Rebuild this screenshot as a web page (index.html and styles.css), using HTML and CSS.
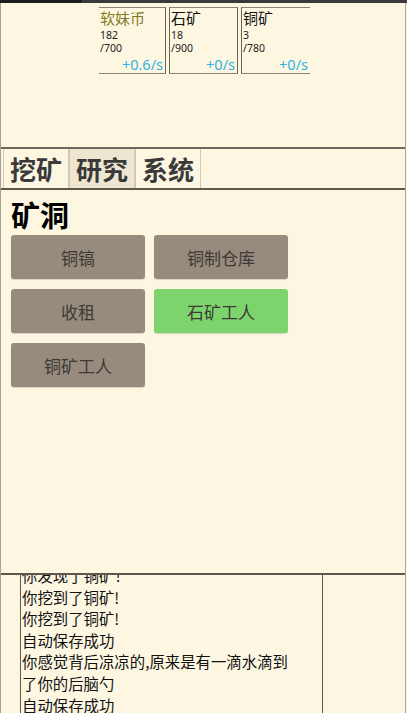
FILE: index.html
```html
<!DOCTYPE html>
<html lang="zh">
<head>
<meta charset="utf-8">
<title>矿洞</title>
<link rel="stylesheet" href="styles.css">
</head>
<body>
<div class="topbar"></div>
<div class="app">
  <section class="resources">
    <div class="res res-first">
      <div class="res-name gold">软妹币</div>
      <div class="res-num">182</div>
      <div class="res-num">/700</div>
      <div class="res-rate">+0.6/s</div>
    </div>
    <div class="res res-mid">
      <div class="res-name">石矿</div>
      <div class="res-num">18</div>
      <div class="res-num">/900</div>
      <div class="res-rate">+0/s</div>
    </div>
    <div class="res res-last">
      <div class="res-name">铜矿</div>
      <div class="res-num">3</div>
      <div class="res-num">/780</div>
      <div class="res-rate">+0/s</div>
    </div>
  </section>
  <nav class="tabs">
    <div class="tab">挖矿</div>
    <div class="tab tab-active">研究</div>
    <div class="tab">系统</div>
  </nav>
  <main class="panel">
    <h2 class="panel-title">矿洞</h2>
    <div class="actions">
      <button class="act">铜镐</button>
      <button class="act">铜制仓库</button>
      <button class="act">收租</button>
      <button class="act act-on">石矿工人</button>
      <button class="act">铜矿工人</button>
    </div>
  </main>
  <section class="log">
    <div class="log-box">
      <div class="log-lines">
        <div class="line">你发现了铜矿！</div>
        <div class="line">你挖到了铜矿!</div>
        <div class="line">你挖到了铜矿!</div>
        <div class="line">自动保存成功</div>
        <div class="line">你感觉背后凉凉的,原来是有一滴水滴到了你的后脑勺</div>
        <div class="line">自动保存成功</div>
      </div>
    </div>
  </section>
</div>
</body>
</html>
```

FILE: styles.css
```css
html, body {
  margin: 0;
  padding: 0;
  background: #fdf7e2;
  font-family: "Noto Sans", "Noto Sans CJK SC", sans-serif;
  color: #000;
}
.topbar {
  height: 3px;
  background: linear-gradient(90deg, #1e1e1e 0, #1e1e1e 82px, #3a3a3a 82px);
}
.app {
  width: 404px;
  border-left: 1px solid #a9a397;
  border-right: 1px solid #a9a397;
}
.resources {
  height: 146px;
  display: flex;
  justify-content: center;
  gap: 3px;
  padding-top: 4px;
  padding-left: 3px;
  box-sizing: border-box;
  border-bottom: 2px solid #6f685c;
}
.res {
  width: 67px;
  height: 67px;
  display: flex;
  flex-direction: column;
  border-top: 1px solid #8a8376;
  border-bottom: 1px solid #8a8376;
  box-sizing: border-box;
  padding: 0 2px 0 1px;
}
.res-first { border-right: 1px solid #6a6458; }
.res-mid { border-left: 1px solid #6a6458; border-right: 1px solid #6a6458; width: 69px; }
.res-last { border-left: 1px solid #6a6458; width: 69px; }
.res-name {
  font-family: "Noto Sans CJK SC", sans-serif;
  font-size: 15px;
  line-height: 19px;
  height: 19px;
  color: #111;
  margin-bottom: 2px;
}
.res-name.gold { color: #7f7a1f; }
.res-num {
  font-size: 10.5px;
  line-height: 13px;
  color: #222;
}
.res-rate {
  margin-top: auto;
  text-align: right;
  font-size: 14.5px;
  line-height: 19px;
  color: #2fb2e4;
  padding-bottom: 0;
}
.tabs {
  display: flex;
  height: 39px;
  padding-left: 2px;
  border-bottom: 2px solid #5e574c;
}
.tab {
  font-family: "Noto Sans CJK SC", sans-serif;
  font-weight: bold;
  font-size: 26px;
  line-height: 39px;
  color: #3a3a3a;
  padding: 0 6px;
  border-left: 1px solid #d0c9ba;
  border-right: 1px solid #d0c9ba;
}
.tab-active { background: #eee6d0; }
.panel {
  height: 385px;
  box-sizing: border-box;
  padding: 4px 10px 0;
  border-bottom: 2px solid #5e574c;
}
.panel-title {
  margin: 0;
  font-family: "Noto Sans CJK SC", sans-serif;
  font-weight: bold;
  font-size: 29px;
  line-height: 40px;
  color: #000;
}
.actions {
  margin-top: 1px;
  display: grid;
  grid-template-columns: 134px 134px;
  column-gap: 9px;
  row-gap: 10px;
}
.act {
  height: 44px;
  border: none;
  border-radius: 3px;
  background: #978b7e;
  color: #3d3a35;
  font-family: "Noto Sans CJK SC", sans-serif;
  font-size: 17px;
  padding: 0;
  box-shadow: 0 1px 1px rgba(0,0,0,0.15);
}
.act-on { background: #7dd46d; }
.log {
  padding-left: 19px;
  height: 140px;
  overflow: hidden;
}
.log-box {
  width: 301px;
  height: 140px;
  border-left: 1px solid #5f584c;
  border-right: 1px solid #5f584c;
  overflow: hidden;
}
.log-lines {
  margin-top: -10px;
  padding: 0 22px 0 1px;
  font-family: "Noto Sans CJK SC", sans-serif;
  font-size: 15.4px;
  line-height: 21.6px;
  color: #111;
}
```
